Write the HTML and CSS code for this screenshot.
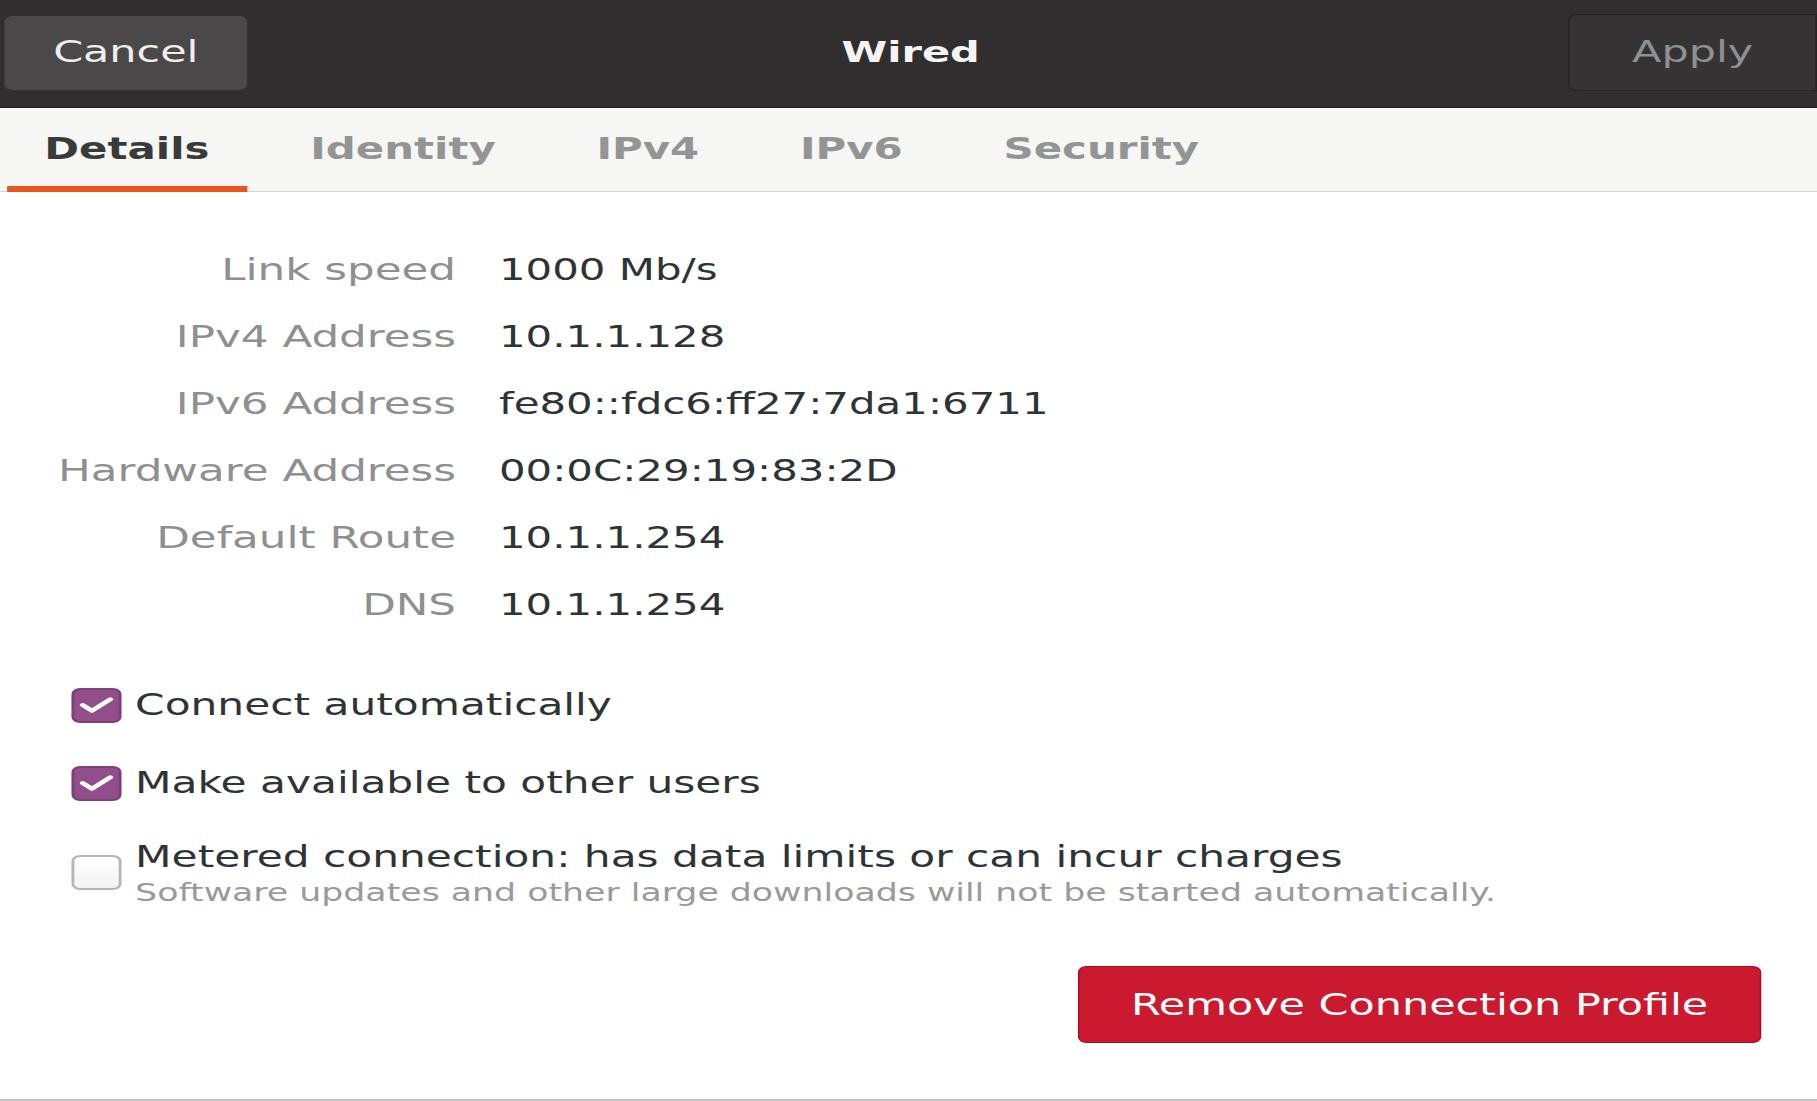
FILE: index.html
```html
<!DOCTYPE html>
<html lang="en">
<head>
  <meta charset="UTF-8">
  <title>Wired</title>
  <link rel="stylesheet" href="styles.css">
</head>
<body>

<div class="window">
  <header class="titlebar">
    <button class="hb-btn cancel">Cancel</button>
    <h1 class="title">Wired</h1>
    <button class="hb-btn apply" disabled>Apply</button>
  </header>

  <nav class="tabs">
    <div class="tab active">Details</div>
    <div class="tab">Identity</div>
    <div class="tab">IPv4</div>
    <div class="tab">IPv6</div>
    <div class="tab">Security</div>
  </nav>

  <main class="content">
    <div class="details">
      <span class="label">Link speed</span>
      <span class="value">1000 Mb/s</span>
      <span class="label">IPv4 Address</span>
      <span class="value">10.1.1.128</span>
      <span class="label">IPv6 Address</span>
      <span class="value">fe80::fdc6:ff27:7da1:6711</span>
      <span class="label">Hardware Address</span>
      <span class="value">00:0C:29:19:83:2D</span>
      <span class="label">Default Route</span>
      <span class="value">10.1.1.254</span>
      <span class="label">DNS</span>
      <span class="value">10.1.1.254</span>
    </div>

    <div class="options">
      <label class="check-row">
        <span class="check on">
          <svg viewBox="0 0 24 24"><polyline points="4.5,12 9.5,16.5 19.5,7.5" /></svg>
        </span>
        <span class="check-text">Connect automatically</span>
      </label>
      <label class="check-row">
        <span class="check on">
          <svg viewBox="0 0 24 24"><polyline points="4.5,12 9.5,16.5 19.5,7.5" /></svg>
        </span>
        <span class="check-text">Make available to other users</span>
      </label>
      <label class="check-row metered">
        <span class="check"></span>
        <span class="check-text">
          Metered connection: has data limits or can incur charges
          <small>Software updates and other large downloads will not be started automatically.</small>
        </span>
      </label>
    </div>

    <div class="actions">
      <button class="destructive">Remove Connection Profile</button>
    </div>
  </main>
</div>

</body>
</html>
```

FILE: styles.css
```css
html, body {
  margin: 0;
  overflow: hidden;
  background: #ffffff;
}

/* the dialog is drawn at 1271px and widened to fill the window */
.window {
  width: 1271px;
  height: 100vh;
  box-sizing: border-box;
  transform: scaleX(1.4296);
  transform-origin: 0 0;
  font-family: "DejaVu Sans", "Liberation Sans", sans-serif;
  color: #2e3436;
  border-bottom: 2px solid #c4c4c4;
}

.titlebar {
  height: 107px;
  background: #302e2e;
  border-bottom: 1px solid #1d1c1c;
  display: grid;
  grid-template-columns: 1fr auto 1fr;
  align-items: center;
  padding-left: 3px;
}

.hb-btn {
  height: 74px;
  width: 170px;
  font-family: inherit;
  font-size: 30px;
  border-radius: 6px;
  border: 1px solid transparent;
  padding-bottom: 4px;
  margin-top: -2px;
}

.cancel {
  background: #4a4848;
  color: #eeeeec;
  justify-self: start;
}

.apply {
  background: #353333;
  border-color: #252323;
  color: #8d9091;
  width: 174px;
  height: 77px;
  justify-self: end;
  border-radius: 6px 0 0 6px;
}

.title {
  margin: 0 0 4px;
  font-size: 29px;
  font-weight: bold;
  color: #f4f4f4;
}

.tabs {
  height: 83px;
  background: #f6f6f5;
  border-bottom: 1px solid #d4d4d2;
  display: flex;
  gap: 18.5px;
  padding-left: 5px;
}

.tab {
  padding: 0 26px;
  display: flex;
  align-items: center;
  font-size: 29.3px;
  font-weight: bold;
  color: #939595;
  box-sizing: border-box;
  border-bottom: 6px solid transparent;
  padding-top: 4px;
  margin-bottom: -1px;
}

.tab.active {
  color: #3a3a3a;
  border-bottom-color: #e95420;
}

.content {
  padding-top: 44px;
}

.details {
  display: grid;
  grid-template-columns: 319px auto;
  grid-auto-rows: 67px;
  column-gap: 30px;
  align-items: center;
}

.label {
  text-align: right;
  font-size: 30.5px;
  color: #8e9090;
}

.value {
  font-size: 29.3px;
  color: #2e3436;
}

.options {
  margin-top: 28px;
  padding-left: 50px;
}

.check-row {
  height: 78px;
  display: flex;
  align-items: center;
  gap: 9.5px;
  font-size: 29.6px;
}

.check {
  width: 35px;
  height: 35px;
  box-sizing: border-box;
  border-radius: 6px;
  border: 2px solid #b5b5b2;
  background: linear-gradient(#ffffff, #f2f2f2);
  flex-shrink: 0;
  display: flex;
  align-items: center;
  justify-content: center;
}

.check.on {
  background: #924d8b;
  border-color: #7d3f77;
}

.check svg {
  width: 32px;
  height: 32px;
  fill: none;
  stroke: #ffffff;
  stroke-width: 3;
  stroke-linecap: round;
  stroke-linejoin: round;
}

.check-row.metered {
  height: 72px;
  margin-top: 17px;
  align-items: center;
}

.metered .check {
  margin-top: -6px;
}

.check-text {
  line-height: 36px;
}

.check-text small {
  display: block;
  font-size: 24.3px;
  color: #9a9a9a;
}

.actions {
  display: flex;
  justify-content: flex-end;
  padding-right: 39px;
  margin-top: 55px;
}

.destructive {
  width: 478px;
  height: 77px;
  font-family: inherit;
  font-size: 30px;
  color: #ffffff;
  background: #cb1a2f;
  border: 1px solid #a31022;
  border-radius: 6px;
}
```
